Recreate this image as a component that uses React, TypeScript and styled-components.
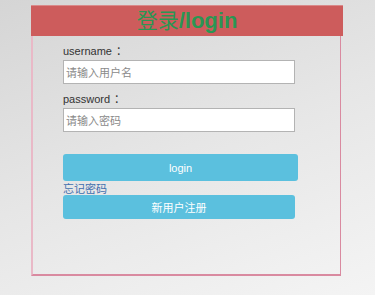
import * as React from 'react';
import styled, { createGlobalStyle } from 'styled-components';

const GlobalStyle = createGlobalStyle`
    html, body {
        margin: 0;
        padding: 0;
    }
    body {
        width: 375px;
        height: 295px;
        overflow: hidden;
        font-family: "Liberation Sans", Arial, "Noto Sans CJK SC", sans-serif;
        background: linear-gradient(160deg, #d5d5d5 0%, #e6e6e6 50%, #f4f4f4 100%);
    }
`;

const Page = styled.div`
    padding: 5px 0 0 31px;
`;

const Card = styled.div`
    width: 307px;
    height: 269px;
    border-left: 2px solid #e9b9c7;
    border-right: 1px solid #d98aa0;
    border-bottom: 2px solid #d98aa0;
`;

const Header = styled.div`
    height: 31px;
    margin: 0 -3px 0 -2px;
    background: #cd5c5c;
    border-top: 1px solid #d98a8a;
    box-sizing: border-box;
    display: flex;
    justify-content: center;
    align-items: flex-start;
`;

const Title = styled.h1`
    margin: 0;
    padding-top: 1px;
    font-size: 21px;
    line-height: 24px;
    font-weight: normal;
    color: #2a9653;
    font-family: "Noto Sans CJK SC", "Liberation Sans", sans-serif;
    b {
        font-family: "Liberation Sans", Arial, sans-serif;
        font-weight: bold;
        font-size: 22px;
    }
`;

const Form = styled.form`
    display: flex;
    flex-direction: column;
    padding: 8px 0 0 30px;
`;

const Label = styled.label<{ $first?: boolean }>`
    display: block;
    height: 15px;
    font-size: 11px;
    line-height: 15px;
    color: #333;
    margin-top: ${p => (p.$first ? '0' : '8px')};
    margin-bottom: 1px;
    span {
        font-family: "Noto Sans CJK SC", sans-serif;
        line-height: 1;
        margin-left: 4px;
    }
`;

const Input = styled.input`
    width: 232px;
    height: 24px;
    box-sizing: border-box;
    border: 1px solid #b3b3b3;
    padding: 0 2px;
    font-size: 11px;
    font-family: "Noto Sans CJK SC", "Liberation Sans", sans-serif;
    background: #fff;
    outline: none;
    &::placeholder {
        color: #8a8a8a;
    }
`;

const Button = styled.button<{ $wide?: boolean }>`
    width: ${p => (p.$wide ? '235px' : '232px')};
    height: ${p => (p.$wide ? '27px' : '24px')};
    margin-top: ${p => (p.$wide ? '22px' : '0')};
    border: none;
    border-radius: 3px;
    background: #5bc0de;
    color: #fff;
    font-size: 11px;
    font-family: "Liberation Sans", Arial, "Noto Sans CJK SC", sans-serif;
    padding: 0;
    cursor: pointer;
`;

const Link = styled.a`
    display: block;
    height: 14px;
    font-size: 11px;
    line-height: 14px;
    color: #3f6fae;
    text-decoration: none;
    font-family: "Noto Sans CJK SC", sans-serif;
    align-self: flex-start;
`;

export default function App() {
    return (
        <>
            <GlobalStyle />
            <Page>
                <Card>
                    <Header>
                        <Title>登录<b>/login</b></Title>
                    </Header>
                    <Form onSubmit={e => e.preventDefault()}>
                        <Label $first>username<span>：</span></Label>
                        <Input type="text" placeholder="请输入用户名" />
                        <Label>password<span>：</span></Label>
                        <Input type="password" placeholder="请输入密码" />
                        <Button $wide type="submit">login</Button>
                        <Link href="#">忘记密码</Link>
                        <Button type="button">新用户注册</Button>
                    </Form>
                </Card>
            </Page>
        </>
    );
}
